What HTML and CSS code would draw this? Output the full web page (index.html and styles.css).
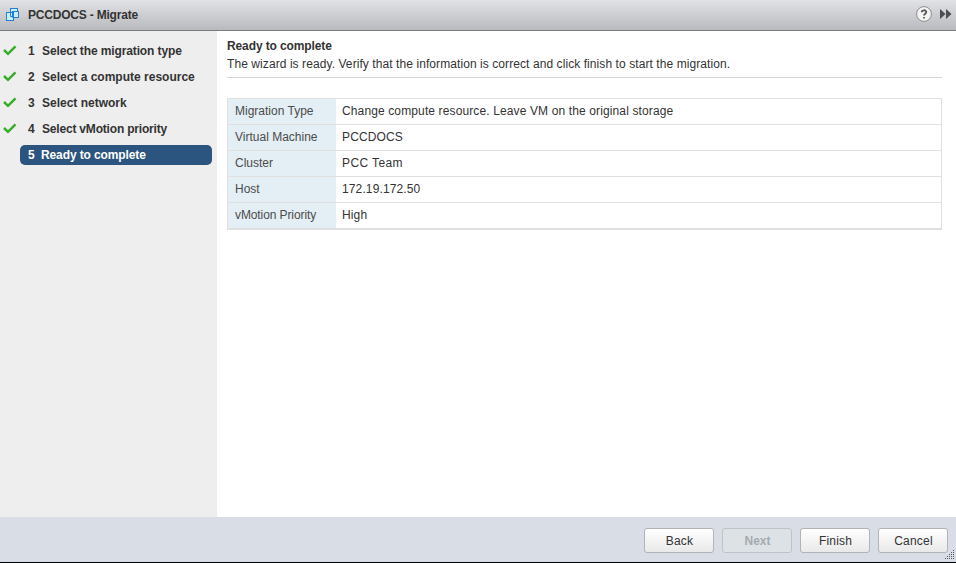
FILE: index.html
```html
<!DOCTYPE html>
<html lang="en">
<head>
<meta charset="utf-8">
<title>PCCDOCS - Migrate</title>
<link rel="stylesheet" href="styles.css">
</head>
<body>
<div class="wizard">
  <header class="titlebar">
    <svg class="vm-icon" width="14" height="14" viewBox="0 0 14 14">
      <g stroke="#2581cf" fill="#c5efff">
        <rect x="4.500" y=".5" width="7" height="7"/>
        <rect x="6.500" y="3.500" width="6" height="6"/>
        <rect x=".5" y="4.500" width="7" height="8"/>
        <path d="M4.500 4.500v4h3M6.500 4.500v5h2" fill="none"/>
      </g>
    </svg>
    <h1>PCCDOCS - Migrate</h1>
    <svg class="help-icon" width="16" height="16" viewBox="0 0 16 16">
      <circle cx="8" cy="8" r="7.400" fill="#f4f4f4" stroke="#8c8c8c"/>
      <path d="M5.700 6.200C5.800 3.700 10.300 3.600 10.300 6.100C10.300 7.700 8 7.700 8 9.600M8 10.900v1.700" fill="none" stroke="#555" stroke-width="1.800"/>
    </svg>
    <svg class="expand-icon" width="12" height="10" viewBox="0 0 12 10"><path d="M0 0L5.500 5L0 10ZM6 0L11.500 5L6 10Z" fill="#4c4d50"/></svg>
  </header>
  <div class="body">
    <nav class="steps">
      <div class="step"><svg class="check" width="14" height="11" viewBox="0 0 14 11"><path d="M1 5L5 8.800L12.500 1.300"/></svg><span class="num">1</span><span class="s1">Select the migration type</span></div>
      <div class="step"><svg class="check" width="14" height="11" viewBox="0 0 14 11"><path d="M1 5L5 8.800L12.500 1.300"/></svg><span class="num">2</span><span class="s2">Select a compute resource</span></div>
      <div class="step"><svg class="check" width="14" height="11" viewBox="0 0 14 11"><path d="M1 5L5 8.800L12.500 1.300"/></svg><span class="num">3</span><span class="s3">Select network</span></div>
      <div class="step"><svg class="check" width="14" height="11" viewBox="0 0 14 11"><path d="M1 5L5 8.800L12.500 1.300"/></svg><span class="num">4</span><span class="s4">Select vMotion priority</span></div>
      <div class="step current"><span class="num">5</span><span class="s5">Ready to complete</span></div>
    </nav>
    <main class="content">
      <h2>Ready to complete</h2>
      <p class="intro">The wizard is ready. Verify that the information is correct and click finish to start the migration.</p>
      <dl class="summary">
        <dt>Migration Type</dt><dd>Change compute resource. Leave VM on the original storage</dd>
        <dt>Virtual Machine</dt><dd>PCCDOCS</dd>
        <dt>Cluster</dt><dd class="cluster">PCC Team</dd>
        <dt>Host</dt><dd>172.19.172.50</dd>
        <dt class="priority">vMotion Priority</dt><dd>High</dd>
      </dl>
    </main>
  </div>
  <footer class="actions">
    <button>Back</button>
    <button disabled>Next</button>
    <button>Finish</button>
    <button>Cancel</button>
    <svg class="grip" width="10" height="10" viewBox="0 0 10 10"><path d="M8 .5h1M6 2.500h1m1 0h1M4 4.500h1m1 0h1m1 0h1M2 6.500h1m1 0h1m1 0h1m1 0h1M0 8.500h1m1 0h1m1 0h1m1 0h1m1 0h1" stroke="#555b60"/></svg>
  </footer>
</div>
</body>
</html>
```

FILE: styles.css
```css
* { box-sizing: border-box; }
body {
  margin: 0;
  font: 12px/16px "Liberation Sans", Arial, sans-serif;
  color: #333;
}
h1, h2, p, dl, dd { margin: 0; font-size: 12px; }
.wizard {
  display: flex;
  flex-direction: column;
  height: 563px;
  border-bottom: 1px solid #000;
  overflow: hidden;
}
.titlebar {
  display: flex;
  align-items: center;
  height: 31px;
  padding: 0 4px 2px 6px;
  background: linear-gradient(#e1e2e6, #b9babd);
  border-bottom: 1px solid #7c7c7c;
}
.titlebar h1 { margin: 2px auto 0 8px; letter-spacing: -0.2px; }
.vm-icon { margin-top: 2px; }
.help-icon { margin-right: 8px; }
.body { display: flex; flex: 1; }
.steps {
  width: 217px;
  padding: 7px 5px 0 0;
  background: #eee;
  font-weight: bold;
}
.step {
  position: relative;
  display: flex;
  align-items: center;
  height: 26px;
  padding-left: 28px;
  white-space: pre;
}
.check { position: absolute; left: 3px; top: 7px; fill: none; stroke: #36ad28; stroke-width: 2.5; }
.num { width: 14px; }
.s1 { letter-spacing: -0.12px; }
.s4 { letter-spacing: -0.19px; }
.s5, h2 { letter-spacing: -0.11px; }
.current {
  height: 20px;
  margin: 3px 0 0 20px;
  padding-left: 8px;
  border-radius: 5px;
  background: #2b547f;
  color: #fff;
}
.current .num { width: 13px; }
.content { flex: 1; padding: 7px 14px 0 10px; background: #fff; }
.intro {
  height: 24px;
  padding-top: 2px;
  border-bottom: 1px solid #d4d4d4;
  letter-spacing: 0.078px;
  white-space: nowrap;
}
.summary {
  display: grid;
  grid-template-columns: 108px 1fr;
  grid-template-rows: repeat(4, 26px) 25px;
  margin-top: 20px;
  border: 1px solid #e0e0e0;
  border-bottom-width: 2px;
}
dt, dd { padding-top: 4px; border-bottom: 1px solid #e0e0e0; }
dt { padding-left: 7px; background: #e4eff5; color: #4b4b4b; }
dd { padding-left: 6px; letter-spacing: 0.125px; }
.cluster { letter-spacing: 0.4px; }
.priority { letter-spacing: -0.1px; }
dt:last-of-type, dd:last-of-type { border-bottom: 0; }
.actions {
  position: relative;
  display: flex;
  justify-content: flex-end;
  gap: 8px;
  height: 45px;
  padding: 11px 8px 0 0;
  background: #d9dee6;
}
button {
  width: 70px;
  height: 25px;
  padding: 0 0 0 1px;
  border: 1px solid #b0b4b7;
  border-radius: 3px;
  background: linear-gradient(#fff, #e9e9e9);
  color: #333;
  font: 12px/16px "Liberation Sans", Arial, sans-serif;
  letter-spacing: 0.2px;
}
button:disabled { border-color: #bdc3c8; background: #dde2e6; color: #a4abb0; font-weight: bold; letter-spacing: 0; }
.grip { position: absolute; right: 1px; bottom: 2px; }
```
